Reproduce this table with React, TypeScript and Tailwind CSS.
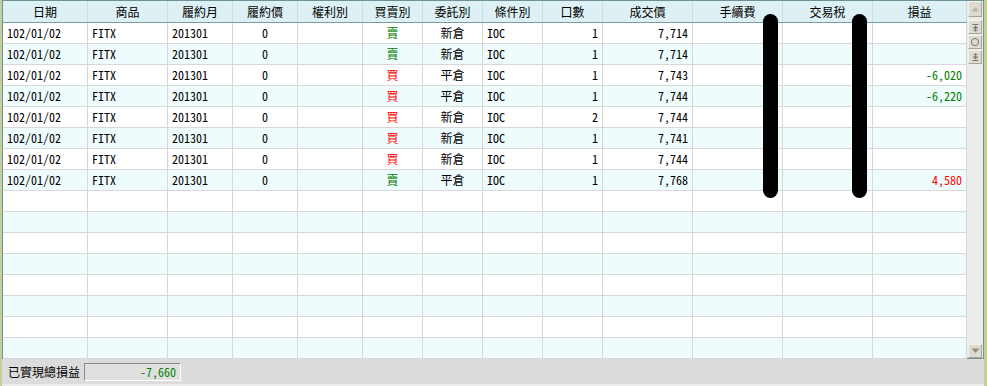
import React from "react";

type Col = { w: string; h: string; a: "l" | "c" | "r" };

const cols: Col[] = [
  { w: "w-[85px]", h: "日期", a: "l" },
  { w: "w-[80px]", h: "商品", a: "l" },
  { w: "w-[65px]", h: "履約月", a: "l" },
  { w: "w-[65px]", h: "履約價", a: "c" },
  { w: "w-[65px]", h: "權利別", a: "c" },
  { w: "w-[60px]", h: "買賣別", a: "c" },
  { w: "w-[60px]", h: "委託別", a: "c" },
  { w: "w-[60px]", h: "條件別", a: "l" },
  { w: "w-[60px]", h: "口數", a: "r" },
  { w: "w-[90px]", h: "成交價", a: "r" },
  { w: "w-[90px]", h: "手續費", a: "r" },
  { w: "w-[90px]", h: "交易稅", a: "r" },
  { w: "w-[94px]", h: "損益", a: "r" },
];

type Row = { side: "買" | "賣"; kind: string; qty: string; price: string; pl: string };

const data: Row[] = [
  { side: "賣", kind: "新倉", qty: "1", price: "7,714", pl: "" },
  { side: "賣", kind: "新倉", qty: "1", price: "7,714", pl: "" },
  { side: "買", kind: "平倉", qty: "1", price: "7,743", pl: "-6,020" },
  { side: "買", kind: "平倉", qty: "1", price: "7,744", pl: "-6,220" },
  { side: "買", kind: "新倉", qty: "2", price: "7,744", pl: "" },
  { side: "買", kind: "新倉", qty: "1", price: "7,741", pl: "" },
  { side: "買", kind: "新倉", qty: "1", price: "7,744", pl: "" },
  { side: "賣", kind: "平倉", qty: "1", price: "7,768", pl: "4,580" },
];

const font = "font-['Noto_Sans_Mono_CJK_TC','Noto_Sans_CJK_TC',monospace]";

const alignCls = (a: "l" | "c" | "r") =>
  a === "l" ? "justify-start" : a === "c" ? "justify-center" : "justify-end";

function Cell({ c, children, cls = "" }: { c: Col; children?: React.ReactNode; cls?: string }) {
  return (
    <div
      className={`${c.w} shrink-0 h-full border-r border-[#d8d8d8] flex items-center px-1 whitespace-nowrap overflow-hidden ${alignCls(c.a)} ${cls}`}
    >
      {children}
    </div>
  );
}

function ScrollBtn({ children, tall = false }: { children: React.ReactNode; tall?: boolean }) {
  return (
    <div
      className={`w-[14px] ${tall ? "h-[16px]" : "h-[14px]"} shrink-0 bg-[#dedbd0] border-b border-r border-[#a9a698] border-t border-l border-t-[#f4f2ea] border-l-[#f4f2ea] flex items-center justify-center`}
    >
      {children}
    </div>
  );
}

export default function App() {
  const rows: (Row | null)[] = [...data, ...Array(8).fill(null)];
  return (
    <div className={`relative w-[987px] h-[386px] bg-[#c5cf9e] pl-[2px] pr-[3px] flex flex-col overflow-hidden text-[12px] leading-none text-black ${font}`}>
      {/* grid */}
      <div className="h-[359px] shrink-0 flex border border-[#6e9296] bg-white">
        <div className="w-[964px] shrink-0 flex flex-col">
          {/* header */}
          <div className="h-[22px] shrink-0 flex bg-[#ddf0f3] border-b border-[#7c9ca0]">
            {cols.map((c, i) => (
              <div
                key={i}
                className={`${c.w} shrink-0 h-full border-r border-[#cadde0] flex items-center justify-center`}
              >
                {c.h}
              </div>
            ))}
          </div>
          {rows.map((r, i) => (
            <div
              key={i}
              className={`h-[21px] shrink-0 flex border-b border-[#d8d8d8] ${i % 2 === 0 ? "bg-white" : "bg-[#effcfd]"}`}
            >
              <Cell c={cols[0]}>{r ? "102/01/02" : ""}</Cell>
              <Cell c={cols[1]}>{r ? "FITX" : ""}</Cell>
              <Cell c={cols[2]}>{r ? "201301" : ""}</Cell>
              <Cell c={cols[3]}>{r ? "0" : ""}</Cell>
              <Cell c={cols[4]} />
              <Cell c={cols[5]} cls={r?.side === "買" ? "text-[#ff0000]" : "text-[#008000]"}>
                {r ? r.side : ""}
              </Cell>
              <Cell c={cols[6]}>{r ? r.kind : ""}</Cell>
              <Cell c={cols[7]}>{r ? "IOC" : ""}</Cell>
              <Cell c={cols[8]}>{r ? r.qty : ""}</Cell>
              <Cell c={cols[9]}>{r ? r.price : ""}</Cell>
              <Cell c={cols[10]} />
              <Cell c={cols[11]} />
              <Cell
                c={cols[12]}
                cls={r && r.pl.startsWith("-") ? "text-[#008000]" : "text-[#ff0000]"}
              >
                {r ? r.pl : ""}
              </Cell>
            </div>
          ))}
        </div>
        {/* scrollbar */}
        <div className="flex-1 bg-[#ececec] flex flex-col items-center">
          <ScrollBtn tall>
            <svg width="9" height="6" viewBox="0 0 9 6">
              <path d="M0.5 5.5 L4.5 1 L8.5 5.5 Z" fill="#b9b7ad" />
            </svg>
          </ScrollBtn>
          <div className="h-[3px] shrink-0" />
          <ScrollBtn>
            <svg width="9" height="9" viewBox="0 0 9 9">
              <path d="M1.5 1.5 H7.5" stroke="#777" strokeWidth="1" />
              <path d="M1.5 5.5 L4.5 2.5 L7.5 5.5 Z" fill="#777" />
              <path d="M4.5 5 V8.5" stroke="#777" strokeWidth="1" />
              <path d="M2.5 7.5 H6.5" stroke="#777" strokeWidth="1" />
            </svg>
          </ScrollBtn>
          <div className="h-[1px] shrink-0" />
          <ScrollBtn>
            <svg width="10" height="10" viewBox="0 0 10 10">
              <circle cx="5" cy="5" r="3.6" fill="none" stroke="#777" strokeWidth="1" />
            </svg>
          </ScrollBtn>
          <div className="h-[1px] shrink-0" />
          <ScrollBtn>
            <svg width="9" height="9" viewBox="0 0 9 9">
              <path d="M1.5 7.5 H7.5" stroke="#777" strokeWidth="1" />
              <path d="M1.5 3.5 L4.5 6.5 L7.5 3.5 Z" fill="#777" />
              <path d="M4.5 0.5 V4" stroke="#777" strokeWidth="1" />
              <path d="M2.5 1.5 H6.5" stroke="#777" strokeWidth="1" />
            </svg>
          </ScrollBtn>
          <div className="flex-1" />
          <ScrollBtn>
            <svg width="9" height="6" viewBox="0 0 9 6">
              <path d="M0.5 0.5 L4.5 5 L8.5 0.5 Z" fill="#8f8d84" />
            </svg>
          </ScrollBtn>
        </div>
      </div>
      {/* footer */}
      <div className="flex-1 bg-[#dcdcdc] border-b-2 border-[#ececec] flex items-center pl-[6px] gap-[4px]">
        <span className="font-['Noto_Sans_CJK_TC',sans-serif]">已實現總損益</span>
        <div className="w-[97px] h-[18px] bg-[#e0e0e0] border border-t-[#8a8a8a] border-l-[#8a8a8a] border-b-white border-r-white flex items-center justify-end pr-[4px] text-[#008000]">
          -7,660
        </div>
      </div>
      {/* redaction marks */}
      <div className="absolute left-[763px] top-[14px] w-[15px] h-[184px] rounded-full bg-black" />
      <div className="absolute left-[852px] top-[14px] w-[15px] h-[184px] rounded-full bg-black" />
    </div>
  );
}
